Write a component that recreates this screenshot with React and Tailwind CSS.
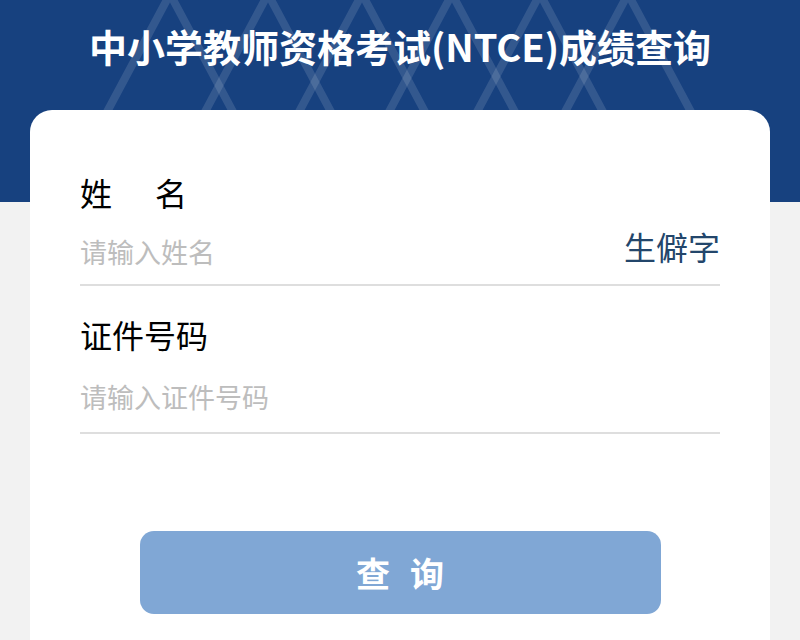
import React from 'react';

const font = { fontFamily: '"Noto Sans CJK SC", "Noto Sans", sans-serif' };

function Zigzag() {
  const peaks = [170, 268, 362, 452, 540, 628];
  return (
    <svg className="absolute inset-0 h-full w-full" viewBox="0 0 800 202" preserveAspectRatio="none">
      {peaks.map((x) => (
        <polyline
          key={x}
          points={`${x - 70},125 ${x},-6 ${x + 70},125`}
          fill="none"
          stroke="#ffffff"
          strokeOpacity="0.12"
          strokeWidth="8"
        />
      ))}
    </svg>
  );
}

function Field({ label, placeholder, action, gap, bottom }) {
  return (
    <div>
      <div className="text-[32px] leading-none text-black">{label}</div>
      <div
        className="flex items-start justify-between border-b-2 border-[#dedede]"
        style={{ marginTop: gap, paddingBottom: bottom }}
      >
        <span className={`${action ? 'mt-[8px]' : ''} text-[27px] leading-none text-[#bdbdbd]`}>{placeholder}</span>
        {action && <span className="text-[32px] leading-none text-[#23466b]">{action}</span>}
      </div>
    </div>
  );
}

export default function App() {
  return (
    <div className="relative h-[640px] w-[800px] overflow-hidden bg-[#f2f2f2]" style={font}>
      <div className="relative h-[202px] bg-[#17417f]">
        <Zigzag />
        <h1 className="relative pt-[27px] text-center text-[38px] font-bold leading-none text-white">
          中小学教师资格考试(NTCE)成绩查询
        </h1>
      </div>

      <div className="relative -mt-[92px] mx-[30px] h-[600px] rounded-[22px] bg-white px-[50px] pt-[66px]">
        <Field
          label={
            <span>
              姓<span className="ml-[43px]">名</span>
            </span>
          }
          placeholder="请输入姓名"
          action="生僻字"
          gap={22}
          bottom={19}
        />
        <div className="mt-[32px]">
          <Field label="证件号码" placeholder="请输入证件号码" gap={33} bottom={22} />
        </div>
        <div className="mt-[97px] flex justify-center">
          <button
            type="button"
            className="flex h-[83px] w-[521px] items-center justify-center rounded-[14px] bg-[#80a7d5] text-[34px] font-bold text-white"
          >
            查<span className="ml-[20px]">询</span>
          </button>
        </div>
      </div>
    </div>
  );
}
